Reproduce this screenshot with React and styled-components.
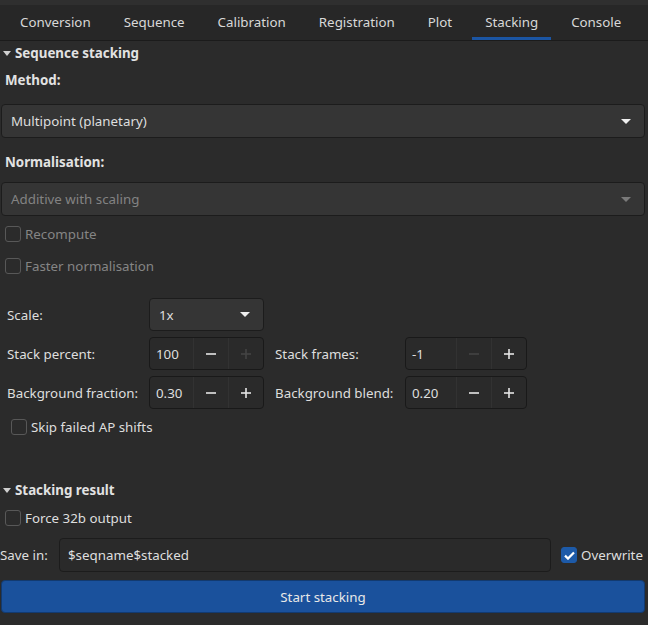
import React, { useState } from "react";
import styled, { createGlobalStyle } from "styled-components";

const GlobalStyle = createGlobalStyle`
  html, body {
    margin: 0;
    padding: 0;
    background: #2b2b2b;
  }
  body {
    font-family: "Noto Sans", "DejaVu Sans", sans-serif;
    font-size: 13.33px;
    color: #dedede;
  }
  * { box-sizing: border-box; }
`;

const TABS = ["Conversion", "Sequence", "Calibration", "Registration", "Plot", "Stacking", "Console"];

const App = () => {
  const [tab, setTab] = useState("Stacking");
  const [overwrite, setOverwrite] = useState(true);

  return (
    <>
      <GlobalStyle />
      <Page>
        <TopStrip />
        <TabBar>
          {TABS.map((t) => (
            <Tab key={t} $active={t === tab} onClick={() => setTab(t)}>
              {t}
            </Tab>
          ))}
        </TabBar>

        <Content>
          <SectionHeader>
            <Caret />
            Sequence stacking
          </SectionHeader>

          <FieldLabel $mt={8}>Method:</FieldLabel>
          <Combo $mt={14} $h={34}>
            <span>Multipoint (planetary)</span>
            <Arrow />
          </Combo>

          <FieldLabel $mt={14}>Normalisation:</FieldLabel>
          <Combo $mt={10} $h={34} $disabled>
            <span>Additive with scaling</span>
            <Arrow $disabled />
          </Combo>

          <CheckRow $mt={8} $disabled>
            <Box />
            Recompute
          </CheckRow>
          <CheckRow $mt={12} $disabled>
            <Box />
            Faster normalisation
          </CheckRow>

          <ParamGrid>
            <ParamLabel>Scale:</ParamLabel>
            <Combo $h={33} $w={115}>
              <span>1x</span>
              <Arrow />
            </Combo>
            <span />
            <span />

            <ParamLabel>Stack percent:</ParamLabel>
            <Spin value="100" plusDisabled />
            <ParamLabel $pad={11}>Stack frames:</ParamLabel>
            <Spin value="-1" minusDisabled wide />

            <ParamLabel>Background fraction:</ParamLabel>
            <Spin value="0.30" />
            <ParamLabel $pad={11}>Background blend:</ParamLabel>
            <Spin value="0.20" wide />
          </ParamGrid>

          <CheckRow $mt={8} $indent={10}>
            <Box />
            Skip failed AP shifts
          </CheckRow>

          <SectionHeader $mt={41}>
            <Caret />
            Stacking result
          </SectionHeader>

          <CheckRow $mt={9}>
            <Box />
            Force 32b output
          </CheckRow>

          <SaveRow>
            <SaveLabel>Save in:</SaveLabel>
            <TextInput defaultValue="$seqname$stacked" />
            <OverwriteLabel onClick={() => setOverwrite(!overwrite)}>
              <Box $checked={overwrite}>
                {overwrite && (
                  <svg width="11" height="9" viewBox="0 0 11 9">
                    <path d="M1 4.6 L4 7.6 L10 1.4" fill="none" stroke="#fff" strokeWidth="2.2" />
                  </svg>
                )}
              </Box>
              Overwrite
            </OverwriteLabel>
          </SaveRow>

          <PrimaryButton>Start stacking</PrimaryButton>
        </Content>
      </Page>
    </>
  );
};

const Spin = ({ value, plusDisabled, minusDisabled, wide }) => (
  <SpinBox $w={wide ? 122 : 115}>
    <SpinValue>{value}</SpinValue>
    <SpinBtn $disabled={minusDisabled}>
      <svg width="12" height="12" viewBox="0 0 12 12">
        <rect x="1" y="5.2" width="10" height="1.6" fill="currentColor" />
      </svg>
    </SpinBtn>
    <SpinBtn $disabled={plusDisabled}>
      <svg width="12" height="12" viewBox="0 0 12 12">
        <rect x="1" y="5.2" width="10" height="1.6" fill="currentColor" />
        <rect x="5.2" y="1" width="1.6" height="10" fill="currentColor" />
      </svg>
    </SpinBtn>
  </SpinBox>
);

export default App;

const Page = styled.div`
  width: 648px;
  height: 625px;
  overflow: hidden;
  background: #2b2b2b;
`;

const TopStrip = styled.div`
  height: 5px;
  background: #2f2f2f;
`;

const TabBar = styled.div`
  display: flex;
  gap: 7px;
  padding-left: 7px;
  height: 36px;
  background: #272727;
  border-bottom: 1px solid #1b1b1b;
`;

const Tab = styled.div`
  display: flex;
  align-items: center;
  padding: 3px 13px 2px;
  height: 35px;
  color: #d8d8d8;
  cursor: pointer;
  border-bottom: 3px solid ${(p) => (p.$active ? "#1b55a3" : "transparent")};
`;

const Content = styled.div`
  display: flex;
  flex-direction: column;
  padding: 0 3px 0 1px;
`;

const SectionHeader = styled.div`
  display: flex;
  align-items: center;
  gap: 4px;
  height: 21px;
  padding-top: 2px;
  margin-top: ${(p) => p.$mt || 0}px;
  padding-left: 2px;
  font-weight: 700;
  color: #e2e2e2;
`;

const Caret = styled.span`
  width: 0;
  height: 0;
  border-left: 4px solid transparent;
  border-right: 4px solid transparent;
  border-top: 5px solid #d0d0d0;
  margin-top: 1px;
`;

const FieldLabel = styled.div`
  height: 20px;
  line-height: 20px;
  margin-top: ${(p) => p.$mt}px;
  padding-left: 4px;
  font-weight: 700;
  color: #e2e2e2;
`;

const Combo = styled.div`
  display: flex;
  align-items: center;
  justify-content: space-between;
  height: ${(p) => p.$h}px;
  width: ${(p) => (p.$w ? `${p.$w}px` : "auto")};
  margin-top: ${(p) => p.$mt || 0}px;
  padding: 0 13px 0 9px;
  background: #353535;
  border: 1px solid #1c1c1c;
  border-radius: 4px;
  color: ${(p) => (p.$disabled ? "#838383" : "#dedede")};
`;

const Arrow = styled.span`
  width: 0;
  height: 0;
  border-left: 5px solid transparent;
  border-right: 5px solid transparent;
  border-top: 5px solid ${(p) => (p.$disabled ? "#7a7a7a" : "#efefef")};
`;

const CheckRow = styled.label`
  display: flex;
  align-items: center;
  gap: 4px;
  height: 20px;
  margin-top: ${(p) => p.$mt}px;
  padding-left: ${(p) => p.$indent || 4}px;
  color: ${(p) => (p.$disabled ? "#858585" : "#dedede")};
`;

const Box = styled.span`
  display: flex;
  align-items: center;
  justify-content: center;
  width: 16px;
  height: 16px;
  border-radius: 3px;
  border: 1px solid ${(p) => (p.$checked ? "#1d5aa8" : "#585858")};
  background: ${(p) => (p.$checked ? "#1d5aa8" : "#2b2b2b")};
  flex-shrink: 0;
`;

const ParamGrid = styled.div`
  display: grid;
  grid-template-columns: 142px 115px 141px 122px;
  grid-auto-rows: 33px;
  row-gap: 6px;
  align-items: center;
  margin-top: 22px;
  padding-left: 6px;
`;

const ParamLabel = styled.span`
  padding-left: ${(p) => p.$pad || 0}px;
  color: #dedede;
`;

const SpinBox = styled.div`
  display: flex;
  width: ${(p) => p.$w}px;
  height: 33px;
  background: #2a2a2a;
  border: 1px solid #191919;
  border-radius: 4px;
  overflow: hidden;
`;

const SpinValue = styled.div`
  flex: 1;
  display: flex;
  align-items: center;
  padding-left: 6px;
  color: #dedede;
`;

const SpinBtn = styled.div`
  width: 35px;
  display: flex;
  align-items: center;
  justify-content: center;
  border-left: 1px solid #323232;
  color: ${(p) => (p.$disabled ? "#444444" : "#e4e4e4")};
`;

const SaveRow = styled.div`
  display: flex;
  align-items: center;
  height: 34px;
  margin-top: 10px;
  margin-left: -1px;
`;

const SaveLabel = styled.span`
  width: 59px;
  color: #dedede;
`;

const TextInput = styled.input`
  width: 492px;
  height: 34px;
  padding: 0 8px;
  background: #2a2a2a;
  border: 1px solid #1c1c1c;
  border-radius: 4px;
  color: #dedede;
  font: inherit;
  outline: none;
`;

const OverwriteLabel = styled.label`
  display: flex;
  align-items: center;
  gap: 4px;
  margin-left: 10px;
  color: #dedede;
  cursor: pointer;
`;

const PrimaryButton = styled.button`
  height: 33px;
  margin-top: 8px;
  background: #1a519c;
  border: 1px solid #123a70;
  border-radius: 4px;
  color: #e8e8e8;
  font: inherit;
  cursor: pointer;
`;
